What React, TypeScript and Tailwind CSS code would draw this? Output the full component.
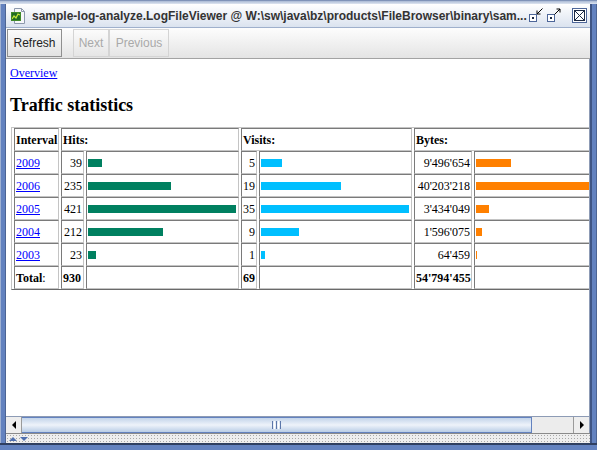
import React from "react";

const rows = [
  { year: "2009", hits: 39, visits: 5, bytes: 9496654 },
  { year: "2006", hits: 235, visits: 19, bytes: 40203218 },
  { year: "2005", hits: 421, visits: 35, bytes: 3434049 },
  { year: "2004", hits: 212, visits: 9, bytes: 1596075 },
  { year: "2003", hits: 23, visits: 1, bytes: 64459 },
];

const BAR_MAX = 148;

function fmt(n: number) {
  return n.toString().replace(/\B(?=(\d{3})+(?!\d))/g, "'");
}

function barWidth(v: number, max: number) {
  return Math.max(1, Math.round((v / max) * BAR_MAX));
}

const cell =
  "border border-t-[#7a7a7a] border-l-[#7a7a7a] border-b-[#c4c4c4] border-r-[#c4c4c4] h-[23px] px-[1px] py-0 whitespace-nowrap";
const barCell =
  "border border-t-[#7a7a7a] border-l-[#7a7a7a] border-b-[#c4c4c4] border-r-[#c4c4c4] h-[23px] pl-[1px] pr-0 py-0";

function Bar({ width, color }: { width: number; color: string }) {
  return <div className={`h-[8px] ${color}`} style={{ width }} />;
}

function TitleIcon() {
  return (
    <svg width="16" height="16" viewBox="0 0 16 16">
      <path d="M3.5 0.5h7l3 3v12h-10z" fill="#f6f7f9" stroke="#8c98ac" />
      <path d="M10.5 0.5v3h3" fill="none" stroke="#8c98ac" />
      <rect x="0" y="4" width="10" height="9" fill="#1f6b24" />
      <path d="M1 11 L3 8 L5 10 L7 6 L9 7" stroke="#c6e83a" fill="none" strokeWidth="1.3" />
      <rect x="0.5" y="4.5" width="9" height="8" fill="none" stroke="#3f8a2a" />
    </svg>
  );
}

function IconifyIcon({ out }: { out?: boolean }) {
  return (
    <svg width="14" height="14" viewBox="0 0 14 14">
      <rect x="0.5" y="6.5" width="7" height="7" fill="#fff" stroke="#4d6699" />
      <rect x="3" y="9" width="2" height="2" fill="#1c2a45" />
      {out ? (
        <>
          <path d="M7.5 6.5 L13 1" stroke="#000" strokeWidth="1" />
          <path d="M9.5 1 H13 V4.5" stroke="#000" fill="none" strokeWidth="1" />
        </>
      ) : (
        <>
          <path d="M8 6 L13.5 0.5" stroke="#000" strokeWidth="1" />
          <path d="M8 2.5 V6 H11.5" stroke="#000" fill="none" strokeWidth="1" />
        </>
      )}
    </svg>
  );
}

function CloseIcon() {
  return (
    <svg width="15" height="15" viewBox="0 0 15 15">
      <rect x="0.5" y="0.5" width="14" height="14" fill="#fff" stroke="#4d6699" />
      <rect x="2.5" y="2.5" width="10" height="10" fill="#fff" stroke="#1c2a45" />
      <path d="M3 3 L12 12 M12 3 L3 12" stroke="#1c2a45" strokeWidth="1" />
    </svg>
  );
}

export default function App() {
  return (
    <div className="w-[597px] h-[450px] flex flex-col bg-[#6382bf] font-['Liberation_Sans',sans-serif] overflow-hidden">
      {/* top frame edge */}
      <div className="h-[4px] shrink-0 bg-gradient-to-b from-[#a9b9d4] to-[#dfe6f1] border-t border-[#7f93b8]" />
      <div className="flex flex-1 min-h-0">
        {/* left frame */}
        <div className="w-[6px] shrink-0 bg-[#6382bf] border-l border-[#9fb1d2] border-r border-r-[#4c6494]" />
        <div className="flex-1 flex flex-col min-w-0">
          {/* title bar */}
          <div className="h-[24px] shrink-0 flex items-center bg-gradient-to-b from-[#ffffff] to-[#dbe3ef] border-b border-[#9fb0cc] pl-[5px] pr-[3px]">
            <TitleIcon />
            <span className="ml-[5px] text-[12px] font-bold text-[#333] whitespace-nowrap">
              {"sample-log-analyze.LogFileViewer @ W:\\sw\\java\\bz\\products\\FileBrowser\\binary\\sam..."}
            </span>
            <div className="flex-1" />
            <div className="flex items-center gap-[4px] mb-[1px] shrink-0">
              <IconifyIcon />
              <IconifyIcon out />
              <div className="ml-[7px]">
                <CloseIcon />
              </div>
            </div>
          </div>
          {/* toolbar */}
          <div className="h-[31px] shrink-0 flex items-center px-[1px] bg-gradient-to-b from-[#fdfdfd] to-[#e4e4e4] border-b border-[#a3a3a3] text-[12px]">
            <button className="h-[28px] w-[55px] border border-[#8f8f8f] bg-gradient-to-b from-[#fbfbfb] to-[#e2e2e2] text-[#222]">
              Refresh
            </button>
            <div className="w-[11px]" />
            <button className="h-[28px] w-[36px] border border-[#d4d4d4] text-[#a9a9a9]">
              Next
            </button>
            <button className="h-[28px] w-[60px] border border-[#d4d4d4] text-[#a9a9a9]">
              Previous
            </button>
          </div>
          {/* content */}
          <div className="flex-1 min-h-0 bg-white overflow-hidden border-r border-[#8d9bb5] font-['Liberation_Serif',serif] text-black pt-[7px] pl-[4px]">
            <a className="text-[12px] text-[#0000ff] underline leading-[14px] block">Overview</a>
            <h2 className="text-[18px] font-bold leading-[21px] mt-[15px]">Traffic statistics</h2>
            <table className="mt-[11px] ml-[1px] border-separate border-spacing-x-[2px] border-spacing-y-0 border border-t-[#c4c4c4] border-l-[#c4c4c4] border-b-[#6a6a6a] border-r-[#6a6a6a] text-[12px] table-fixed w-[621px]">
              <colgroup>
                <col className="w-[45px]" />
                <col className="w-[23px]" />
                <col className="w-[153px]" />
                <col className="w-[16px]" />
                <col className="w-[153px]" />
                <col className="w-[58px]" />
                <col className="w-[155px]" />
              </colgroup>
              <tbody>
                <tr>
                  <td className={`${cell} font-bold`}>Interval</td>
                  <td className={`${cell} font-bold`} colSpan={2}>Hits:</td>
                  <td className={`${cell} font-bold`} colSpan={2}>Visits:</td>
                  <td className={`${cell} font-bold`} colSpan={2}>Bytes:</td>
                </tr>
                {rows.map((r) => (
                  <tr key={r.year}>
                    <td className={cell}>
                      <a className="text-[#0000ff] underline">{r.year}</a>
                    </td>
                    <td className={`${cell} text-right`}>{r.hits}</td>
                    <td className={barCell}>
                      <Bar width={barWidth(r.hits, 421)} color="bg-[#008060]" />
                    </td>
                    <td className={`${cell} text-right`}>{r.visits}</td>
                    <td className={barCell}>
                      <Bar width={barWidth(r.visits, 35)} color="bg-[#00bfff]" />
                    </td>
                    <td className={`${cell} text-right`}>{fmt(r.bytes)}</td>
                    <td className={barCell}>
                      <Bar width={barWidth(r.bytes, 40203218)} color="bg-[#ff8000]" />
                    </td>
                  </tr>
                ))}
                <tr>
                  <td className={cell}>
                    <b>Total</b>:
                  </td>
                  <td className={`${cell} font-bold`}>930</td>
                  <td className={cell} />
                  <td className={`${cell} font-bold`}>69</td>
                  <td className={cell} />
                  <td className={`${cell} font-bold`}>{fmt(54794455)}</td>
                  <td className={cell} />
                </tr>
              </tbody>
            </table>
          </div>
          {/* horizontal scrollbar */}
          <div className="h-[17px] shrink-0 flex bg-[#eeeeee] border-t border-[#8d9bb5] border-r border-r-[#8d9bb5]">
            <div className="w-[16px] shrink-0 flex items-center justify-center border-r border-[#9a9a9a]">
              <div className="w-0 h-0 border-y-[4px] border-y-transparent border-r-[4px] border-r-black" />
            </div>
            <div className="w-[510px] shrink-0 flex items-center justify-center border-y border-r border-[#6382bf] bg-gradient-to-b from-[#c3d4ea] via-[#eef3fa] to-[#b9cde6]">
              <div className="flex gap-[1px] h-[8px]">
                <div className="w-[1px] bg-[#5c77aa]" />
                <div className="w-[1px] bg-white" />
                <div className="w-[1px] bg-[#5c77aa]" />
                <div className="w-[1px] bg-white" />
                <div className="w-[1px] bg-[#5c77aa]" />
              </div>
            </div>
            <div className="flex-1 bg-[#ececec]" />
            <div className="w-[16px] shrink-0 flex items-center justify-center border-l border-[#9a9a9a]">
              <div className="w-0 h-0 border-y-[4px] border-y-transparent border-l-[4px] border-l-black" />
            </div>
          </div>
          {/* divider strip */}
          <div className="h-[10px] shrink-0 flex items-center gap-[3px] pl-[3px] border-t border-[#8a8a8a] bg-[#eeeeee] bg-[radial-gradient(circle,#a8a8a8_0.7px,transparent_0.9px)] bg-[length:3px_3px]">
            <div className="w-0 h-0 border-x-[4px] border-x-transparent border-b-[4px] border-b-[#4f6fae]" />
            <div className="w-0 h-0 border-x-[4px] border-x-transparent border-t-[4px] border-t-[#4f6fae]" />
          </div>
        </div>
        {/* right frame */}
        <div className="w-[7px] shrink-0 bg-[#6382bf] border-l-2 border-[#3f5584] border-r border-r-[#4c6494]" />
      </div>
      {/* bottom frame */}
      <div className="h-[7px] shrink-0 bg-[#6382bf] border-t-2 border-[#2f3f60]" />
    </div>
  );
}
